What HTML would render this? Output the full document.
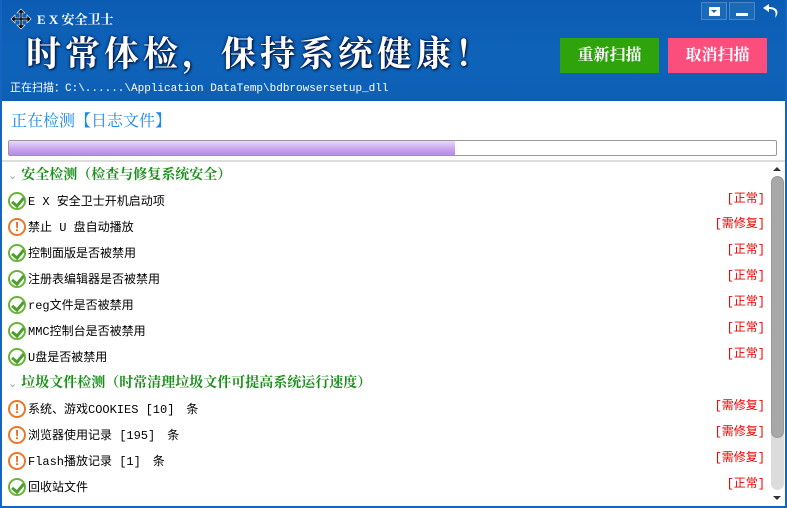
<!DOCTYPE html>
<html><head><meta charset="utf-8"><style>
*{margin:0;padding:0;box-sizing:border-box}
body{width:787px;height:508px;overflow:hidden;background:#fff;font-family:"Liberation Sans","Noto Sans CJK SC",sans-serif;position:relative}
.hd{position:absolute;left:0;top:0;width:787px;height:101px;background:linear-gradient(180deg,#0c5cb3 0%,#0e63b9 60%,#0d5fb3 100%)}
.win{position:absolute;left:0;top:0;width:787px;height:508px;border-left:2px solid #1565c0;border-right:2px solid #1565c0;border-bottom:2px solid #1565c0;pointer-events:none}
.t{position:absolute;white-space:nowrap}
.btn{position:absolute;top:38px;height:35px;width:99px;color:#fff;font-size:16px;font-weight:bold;text-align:center;line-height:35px;font-family:"Liberation Serif","Noto Serif CJK SC",serif}
.row{position:absolute;left:8px;height:20px;font-size:12px;color:#000;line-height:20px;white-space:nowrap;font-family:"Liberation Mono","Noto Sans CJK SC",monospace}
.ic{display:inline-block;width:18px;height:18px;border-radius:50%;vertical-align:middle;margin-right:2px;position:relative;top:-1px}
.ok{border:2px solid #6cb33a;background:#fff}
.ok:after{content:"";position:absolute;left:4px;top:1px;width:5px;height:9px;border:solid #4aa02a;border-width:0 3px 3px 0;transform:rotate(40deg)}
.wa{border:2px solid #e8782a;background:#fff;color:#e8601a;font-weight:bold;text-align:center;line-height:14px;font-size:13px;font-family:"Liberation Sans",sans-serif}
.st{position:absolute;right:22px;font-size:12px;color:#e00;white-space:nowrap;font-family:"Liberation Mono","Noto Sans CJK SC",monospace}
.sec{position:absolute;left:8px;font-size:14px;font-weight:bold;color:#1b8f1b;white-space:nowrap;font-family:"Liberation Serif","Noto Serif CJK SC",serif}
.sec b{color:#8ab;font-weight:normal;font-size:11px;margin-right:4px}
</style></head><body>
<div class="hd"></div>
<svg class="t" style="left:10px;top:8px" width="22" height="22" viewBox="0 0 22 22"><path d="M11 1L7 5h3v5H5V7L1 11l4 4v-3h5v5H7l4 4 4-4h-3v-5h5v3l4-4-4-4v3h-5V5h3z" fill="#000" stroke="#fff" stroke-width=".6"/></svg>
<div class="t" style="left:37px;top:9px;color:#fff;font-size:13px;font-weight:bold;font-family:'Liberation Serif','Noto Serif CJK SC',serif">E X 安全卫士</div>
<div class="t" style="left:26px;top:27px;color:#fff;font-size:35px;font-weight:bold;letter-spacing:4px;font-family:'Liberation Serif','Noto Serif CJK SC',serif;text-shadow:0 0 3px #003,1px 1px 2px #024">时常体检，保持系统健康！</div>
<div class="t" style="left:10px;top:79px;color:#fff;font-size:11px;font-family:'Liberation Mono','Noto Sans CJK SC',monospace">正在扫描：C:\......\Application DataTemp\bdbrowsersetup_dll</div>
<div class="btn" style="left:560px;background:#2ea30b">重新扫描</div>
<div class="btn" style="left:668px;background:#fc4e7c">取消扫描</div>
<div class="t" style="left:701px;top:2px;width:26px;height:18px;border:1px solid #4a86c8;background:#1a6ab8"><div style="margin:4px auto;width:11px;height:9px;background:#fff;border:1px solid #fff"><div style="height:3px;margin:2px auto;border-left:3px solid transparent;border-right:3px solid transparent;border-top:3px solid #1a6ab8;width:0"></div></div></div>
<div class="t" style="left:729px;top:2px;width:26px;height:18px;border:1px solid #4a86c8;background:#1a6ab8"><div style="margin:10px auto 0;width:12px;height:3px;background:#fff"></div></div>
<svg class="t" style="left:760px;top:2px" width="22" height="18" viewBox="0 0 22 18"><path d="M9 2L3 6l6 4V7c5 0 8 2 6 9 5-6 2-11-6-11z" fill="#fff"/></svg>
<div class="t" style="left:11px;top:108px;color:#1a8ae8;font-size:16px;font-family:'Liberation Serif','Noto Serif CJK SC',serif">正在检测【日志文件】</div>
<div class="t" style="left:8px;top:140px;width:769px;height:16px;border:1px solid #999;border-radius:2px;background:#fff"><div style="width:446px;height:14px;background:linear-gradient(#e9d8fb,#c7a2ef 60%,#b98be6)"></div></div>
<div class="t" style="left:0;top:160px;width:787px;height:2px;background:#ddd"></div>
<div class="sec" style="top:164px"><b>⌄</b>安全检测（检查与修复系统安全）</div>
<div class="row" style="top:192px"><span class="ic ok"></span>E X 安全卫士开机启动项</div><div class="st" style="top:189px">[正常]</div>
<div class="row" style="top:218px"><span class="ic wa">!</span>禁止 U 盘自动播放</div><div class="st" style="top:214px">[需修复]</div>
<div class="row" style="top:244px"><span class="ic ok"></span>控制面版是否被禁用</div><div class="st" style="top:240px">[正常]</div>
<div class="row" style="top:270px"><span class="ic ok"></span>注册表编辑器是否被禁用</div><div class="st" style="top:266px">[正常]</div>
<div class="row" style="top:296px"><span class="ic ok"></span>reg文件是否被禁用</div><div class="st" style="top:292px">[正常]</div>
<div class="row" style="top:322px"><span class="ic ok"></span>MMC控制台是否被禁用</div><div class="st" style="top:318px">[正常]</div>
<div class="row" style="top:348px"><span class="ic ok"></span>U盘是否被禁用</div><div class="st" style="top:344px">[正常]</div>
<div class="sec" style="top:372px"><b>⌄</b>垃圾文件检测（时常清理垃圾文件可提高系统运行速度）</div>
<div class="row" style="top:400px"><span class="ic wa">!</span>系统、游戏COOKIES [10]　条</div><div class="st" style="top:396px">[需修复]</div>
<div class="row" style="top:426px"><span class="ic wa">!</span>浏览器使用记录 [195]　条</div><div class="st" style="top:422px">[需修复]</div>
<div class="row" style="top:452px"><span class="ic wa">!</span>Flash播放记录 [1]　条</div><div class="st" style="top:448px">[需修复]</div>
<div class="row" style="top:478px"><span class="ic ok"></span>回收站文件</div><div class="st" style="top:474px">[正常]</div>
<div class="t" style="left:771px;top:176px;width:13px;height:314px;border-radius:7px;background:#dcdcdc"></div>
<div class="t" style="left:771px;top:176px;width:13px;height:262px;border-radius:7px;background:#a8a8a8;border:1px solid #999"></div>
<div class="t" style="left:773px;top:167px;border-left:4px solid transparent;border-right:4px solid transparent;border-bottom:4px solid #333"></div>
<div class="t" style="left:773px;top:496px;border-left:4px solid transparent;border-right:4px solid transparent;border-top:4px solid #333"></div>
<div class="win"></div>
</body></html>
